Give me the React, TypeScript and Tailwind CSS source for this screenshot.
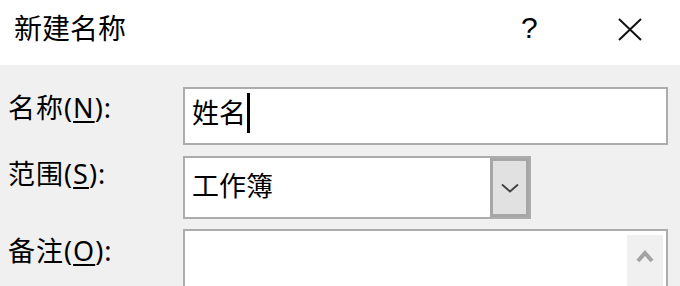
import React from "react";

const font = { fontFamily: '"Noto Sans", "Noto Sans CJK SC", sans-serif' };

function Label({ text, hotkey, className }: { text: string; hotkey: string; className?: string }) {
  return (
    <div className={"text-[27px] leading-none text-black tracking-[1px] " + (className ?? "")}>
      {text}(<span className="underline underline-offset-[3px] decoration-[2px]">{hotkey}</span>):
    </div>
  );
}

export default function App() {
  return (
    <div className="w-[680px] h-[286px] overflow-hidden flex flex-col bg-[#f0f0f0]" style={font}>
      {/* Title bar */}
      <div className="h-[65px] bg-white flex items-start shrink-0">
        <div className="pl-[14px] pt-[14px] text-[28px] leading-none text-black">新建名称</div>
        <div className="ml-auto flex items-start pt-[13px] pr-[38px]">
          <span
            className="w-[12px] text-[30px] leading-none text-black"
            style={{ fontFamily: '"Liberation Sans", sans-serif' }}
          >
            ?
          </span>
          <svg className="ml-[85px] mt-[5px]" width="24" height="23" viewBox="0 0 24 23">
            <path d="M1 1 L23 22 M23 1 L1 22" stroke="#111" strokeWidth="2" fill="none" />
          </svg>
        </div>
      </div>

      {/* Body */}
      <div className="flex-1 pt-[22px] pl-[8px] pr-[12px] grid grid-cols-[175px_1fr] gap-y-[11px] content-start">
        <Label text="名称" hotkey="N" className="pt-[7px]" />
        <div className="h-[58px] border-2 border-[#acacac] bg-white flex items-start pl-[7px]">
          <span className="mt-[10px] text-[27px] leading-none text-black">姓名</span>
          <span className="mt-[4px] ml-[1px] w-[3px] h-[40px] bg-black" />
        </div>

        <Label text="范围" hotkey="S" className="pt-[4px]" />
        <div className="w-[348px] h-[63px] border-2 border-[#acacac] bg-white flex">
          <div className="flex-1 pl-[7px] pt-[14px] text-[27px] leading-none text-black">工作簿</div>
          <div className="w-[39px] h-full border-[3px] border-[#a6a6a6] bg-[#e1e1e1] flex items-center justify-center">
            <svg width="18" height="10" viewBox="0 0 18 10">
              <polyline points="1,1.5 9,8.5 17,1.5" stroke="#404040" strokeWidth="1.8" fill="none" />
            </svg>
          </div>
        </div>

        <Label text="备注" hotkey="O" className="pt-[8px] -mt-[1px]" />
        <div className="h-[90px] -mt-[1px] border-2 border-[#acacac] bg-white flex justify-end pt-[4px] pr-[3px]">
          <div className="w-[36px] h-full bg-[#f0f0f0] flex justify-center pt-[14px]">
            <svg width="18" height="14" viewBox="0 0 18 14">
              <polyline points="2,12 9,4 16,12" stroke="#a3a3a3" strokeWidth="4" fill="none" />
            </svg>
          </div>
        </div>
      </div>
    </div>
  );
}
